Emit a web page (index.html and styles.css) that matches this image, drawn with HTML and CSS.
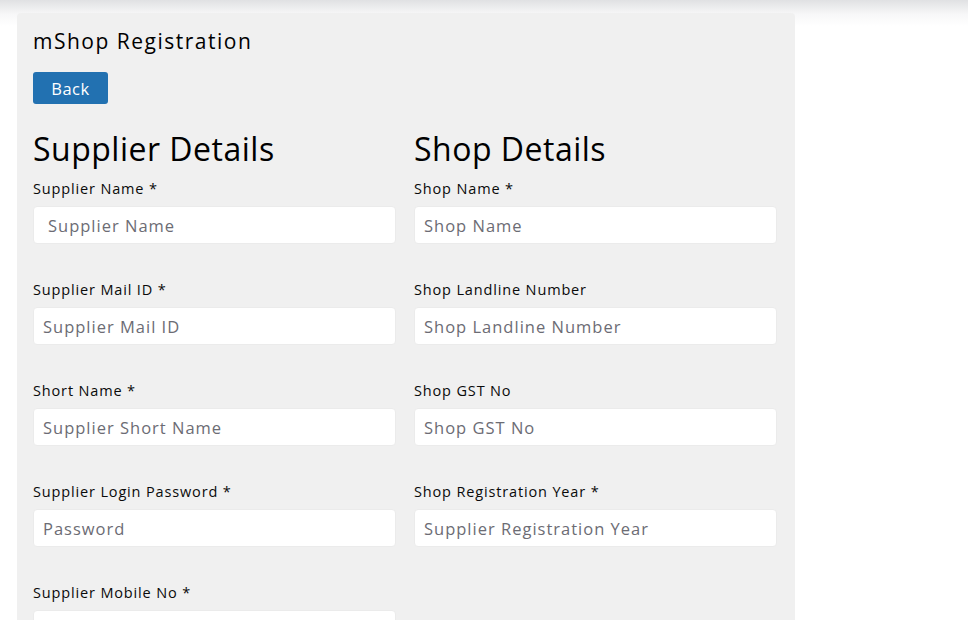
FILE: index.html
```html
<!DOCTYPE html>
<html>
<head>
<meta charset="utf-8">
<link rel="stylesheet" href="styles.css">
</head>
<body>
<div class="card">
  <h1 class="title">mShop Registration</h1>
  <button class="btn-back">Back</button>
  <div class="cols">
    <section class="col">
      <h2 class="heading">Supplier Details</h2>
      <div class="field"><label>Supplier Name *</label><input class="wide" placeholder="Supplier Name"></div>
      <div class="field"><label>Supplier Mail ID *</label><input placeholder="Supplier Mail ID"></div>
      <div class="field"><label>Short Name *</label><input placeholder="Supplier Short Name"></div>
      <div class="field"><label>Supplier Login Password *</label><input placeholder="Password"></div>
      <div class="field"><label>Supplier Mobile No *</label><input placeholder="Supplier Mobile No"></div>
    </section>
    <section class="col">
      <h2 class="heading">Shop Details</h2>
      <div class="field"><label>Shop Name *</label><input placeholder="Shop Name"></div>
      <div class="field"><label>Shop Landline Number</label><input placeholder="Shop Landline Number"></div>
      <div class="field"><label>Shop GST No</label><input placeholder="Shop GST No"></div>
      <div class="field"><label>Shop Registration Year *</label><input placeholder="Supplier Registration Year"></div>
    </section>
  </div>
</div>
</body>
</html>
```
FILE: styles.css
```css
html, body { margin: 0; padding: 0; height: 100%; overflow: hidden; }
body {
  font-family: "Open Sans", "Liberation Sans", sans-serif;
  background: #fff linear-gradient(#e0e1e3 0, #f7f7f8 14px, #fff 26px) no-repeat;
  background-size: 100% 26px;
  padding-top: 13px;
  padding-left: 17px;
}
.card {
  width: 778px;
  box-sizing: border-box;
  background: #f0f0f0;
  border-radius: 4px 4px 0 0;
  padding: 13px 18px 40px 16px;
  height: 620px;
}
.title {
  font-size: 21px;
  font-weight: 400;
  line-height: 30px;
  letter-spacing: 1.5px;
  margin: 0;
  color: #000;
}
.btn-back {
  margin-top: 16px;
  width: 75px;
  height: 32px;
  background: #2271b1;
  color: #fff;
  border: none;
  border-radius: 3px;
  font: inherit;
  font-size: 16.5px;
  letter-spacing: 0.5px;
  padding: 0;
}
.cols {
  display: flex;
  gap: 18px;
  margin-top: 26px;
}
.col { width: 363px; }
.heading {
  font-size: 32px;
  font-weight: 400;
  line-height: 38px;
  letter-spacing: 0.5px;
  margin: 0;
  color: #000;
}
.field { margin-bottom: 35px; }
.field label {
  display: block;
  font-size: 14.5px;
  line-height: 21px;
  letter-spacing: 0.85px;
  margin-top: 10px;
  margin-bottom: 7px;
  color: #0a0a0a;
}
.field + .field label { margin-top: 0; }
.field input {
  display: block;
  width: 100%;
  box-sizing: border-box;
  height: 38px;
  border: 1px solid #ebebeb;
  border-radius: 4px;
  background: #fff;
  padding: 0 9px;
  font: inherit;
  font-size: 16.5px;
  letter-spacing: 1px;
}
.field input.wide { padding-left: 14px; }
.field input::placeholder { color: #6c6c74; }
```
